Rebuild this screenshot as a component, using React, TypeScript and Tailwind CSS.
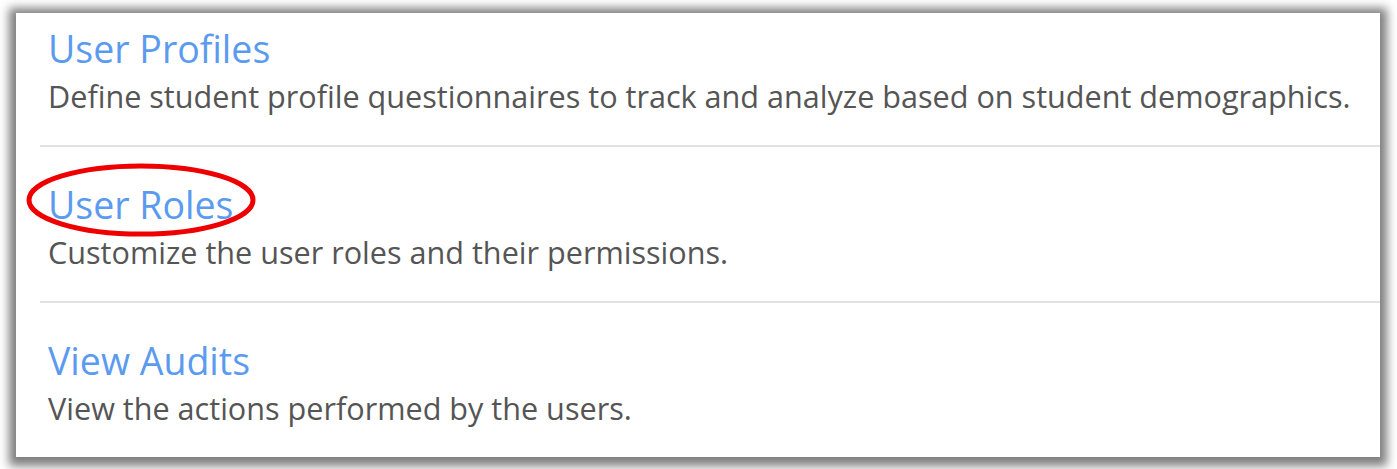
import React from "react";

const items = [
  {
    title: "User Profiles",
    text: "Define student profile questionnaires to track and analyze based on student demographics.",
  },
  { title: "User Roles", text: "Customize the user roles and their permissions." },
  { title: "View Audits", text: "View the actions performed by the users." },
];

export default function App() {
  return (
    <div className="h-[469px] w-[1397px] bg-white pl-4 pt-[13px]" style={{ fontFamily: '"Open Sans", sans-serif' }}>
      <div className="h-[444px] w-[1364px] bg-white pl-6 shadow-[0_2px_9px_7px_rgba(0,0,0,0.5)]">
        {items.map((item, i) => (
          <div key={item.title} className={i === 0 ? "pt-[14px]" : "pt-[36px]"}>
            <div className="pl-2">
              <div className="relative inline-block">
                <a className="block text-[37.5px] leading-[44px] text-[#5b9bef]">{item.title}</a>
                {item.title === "User Roles" && (
                  <svg className="absolute left-[-24px] top-[-21px]" width="234" height="76" viewBox="0 0 234 76">
                    <ellipse cx="117" cy="38" rx="112" ry="34" fill="none" stroke="#ee0000" strokeWidth="5" />
                  </svg>
                )}
              </div>
              <p className="mt-[7px] text-[30.6px] leading-[36px] text-[#555555]">{item.text}</p>
            </div>
            {i < 2 && <div className="mt-[31px] h-[2px] bg-[#e2e2e2]" />}
          </div>
        ))}
      </div>
    </div>
  );
}
